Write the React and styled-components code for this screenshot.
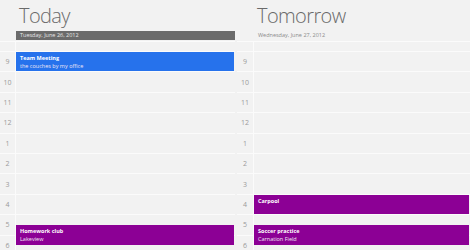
import React from 'react';
import styled, { createGlobalStyle } from 'styled-components';

const ROW = 20.4;
const START = 9;

const Global = createGlobalStyle`
    html, body {
        margin: 0;
        padding: 0;
        background: #f2f2f2;
        overflow: hidden;
    }
    body {
        font-family: "Open Sans", "Liberation Sans", sans-serif;
    }
`

const Page = styled.div`
    display: flex;
    gap: 2px;
    width: 470px;
    height: 250px;
    overflow: hidden;
    background: #f2f2f2;
`

const Day = styled.div`
    display: flex;
    flex-direction: column;
    width: ${p => p.width}px;
    flex-shrink: 0;
`

const Header = styled.div`
    padding-left: ${p => p.gutter}px;
`

const Title = styled.div`
    font-family: "Open Sans", "Liberation Sans", sans-serif;
    font-weight: 300;
    font-size: 20px;
    line-height: 22px;
    color: #6a6a6a;
    height: 31px;
    padding-left: 3px;
    padding-top: 5px;
    box-sizing: border-box;
    letter-spacing: -0.6px;
`

const DateBar = styled.div`
    height: 9px;
    line-height: 9px;
    font-size: 5.5px;
    padding-left: 4px;
    color: ${p => p.active ? '#e8e8e8' : '#8a8a8a'};
    background: ${p => p.active ? '#6b6b6b' : 'transparent'};
    margin-bottom: 1px;
`

const Body = styled.div`
    display: flex;
    border-top: 1px solid #fbfbfb;
`

const Gutter = styled.div`
    width: ${p => p.width}px;
    flex-shrink: 0;
    border-right: 1px solid #fbfbfb;
    box-sizing: border-box;
`

const Column = styled.div`
    position: relative;
    flex: 1;
`

const AllDay = styled.div`
    height: 10px;
    border-bottom: 1px solid #fbfbfb;
    box-sizing: border-box;
`

const Slot = styled.div`
    height: ${ROW}px;
    border-bottom: 1px solid #fbfbfb;
    box-sizing: border-box;
    display: flex;
    align-items: center;
    justify-content: center;
    font-size: 7px;
    color: #9a9a9a;
`

const Event = styled.div`
    position: absolute;
    left: 0;
    right: 1px;
    background: ${p => p.color};
    color: #fff;
    padding: 3px 4px;
    box-sizing: border-box;
    font-size: 5.5px;
    line-height: 7.5px;
`

const EventTitle = styled.div`
    font-weight: 700;
`

const EventPlace = styled.div`
    color: #f0e6f4;
`

const hours = [9, 10, 11, 12, 1, 2, 3, 4, 5, 6];

const days = [
    {
        title: 'Today',
        date: 'Tuesday, June 26, 2012',
        active: true,
        width: 235,
        gutter: 16,
        events: [
            {title: 'Team Meeting', place: 'the couches by my office', start: 9, end: 10, color: '#2672ec'},
            {title: 'Homework club', place: 'Lakeview', start: 17.5, end: 18.5, color: '#8c0095'},
        ],
    },
    {
        title: 'Tomorrow',
        date: 'Wednesday, June 27, 2012',
        active: false,
        width: 233,
        gutter: 17,
        events: [
            {title: 'Carpool', place: '', start: 16, end: 17, color: '#8c0095'},
            {title: 'Soccer practice', place: 'Carnation Field', start: 17.5, end: 18.5, color: '#8c0095'},
        ],
    },
];

function DayView({day}) {
    return <Day width={day.width}>
        <Header gutter={day.gutter}>
            <Title>{day.title}</Title>
            <DateBar active={day.active}>{day.date}</DateBar>
        </Header>
        <Body>
            <Gutter width={day.gutter}>
                <AllDay />
                {hours.map(h => <Slot key={h}>{h}</Slot>)}
            </Gutter>
            <Column>
                <AllDay />
                {hours.map(h => <Slot key={h} />)}
                {day.events.map((ev, i) => (
                    <Event key={i} color={ev.color} style={{
                        top: 10 + (ev.start - START) * ROW,
                        height: (ev.end - ev.start) * ROW - 1,
                    }}>
                        <EventTitle>{ev.title}</EventTitle>
                        {ev.place && <EventPlace>{ev.place}</EventPlace>}
                    </Event>
                ))}
            </Column>
        </Body>
    </Day>;
}

export default function App() {
    return <>
        <Global />
        <Page>
            {days.map(d => <DayView key={d.title} day={d} />)}
        </Page>
    </>;
}
